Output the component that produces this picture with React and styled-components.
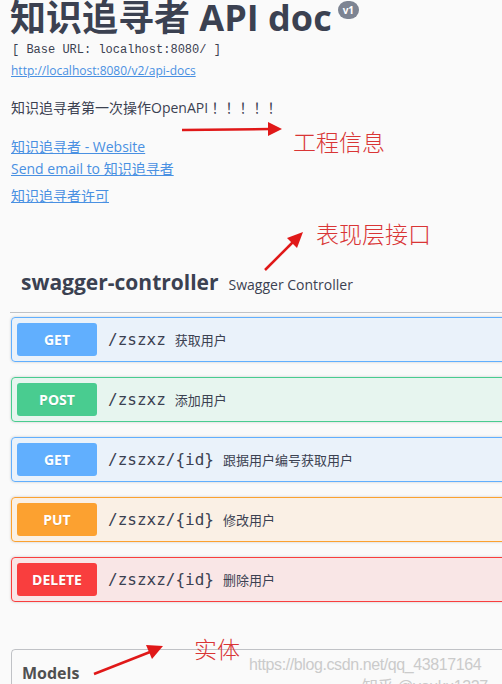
import React from "react";
import styled, { createGlobalStyle } from "styled-components";

const Global = createGlobalStyle`
  html, body { margin: 0; padding: 0; overflow: hidden; background: #fafafa; }
  body { font-family: "Open Sans", "Noto Sans CJK SC", sans-serif; color: #3b4151; }
`;

const Page = styled.div`
  position: relative;
  width: 540px;
  padding-left: 10px;
  height: 684px;
`;

const Info = styled.div`
  display: flex;
  flex-direction: column;
  align-items: flex-start;
`;

const Title = styled.h2`
  margin: 0;
  font-size: 36px;
  line-height: 36px;
  font-weight: 700;
  color: #3b4151;
  display: flex;
  align-items: flex-start;
`;

const Version = styled.span`
  margin-left: 6px;
  margin-top: 1px;
  background: #7d8492;
  color: #fff;
  font-size: 10px;
  font-weight: 700;
  line-height: 18px;
  height: 18px;
  padding: 0 5px;
  border-radius: 9px;
`;

const BaseUrl = styled.pre`
  margin: 6px 0 0 2px;
  font-family: "Liberation Mono", monospace;
  font-size: 12px;
  line-height: 16px;
  color: #3b4151;
`;

const Link = styled.a`
  color: #4990e2;
  text-decoration: underline;
  font-size: ${(p) => (p.$small ? "12px" : "14px")};
  line-height: ${(p) => (p.$small ? "16px" : "20px")};
  margin-top: ${(p) => p.$mt || 0}px;
  margin-left: 1px;
`;

const Description = styled.div`
  margin-top: 18px;
  margin-left: 1px;
  font-size: 14px;
  line-height: 20px;
  color: #3b4151;
`;

const Wide = styled.span`
  font-family: "Noto Sans CJK TC", "Noto Sans CJK SC", sans-serif;
`;

const TagHeader = styled.div`
  margin-top: 61px;
  display: flex;
  align-items: baseline;
  padding: 0 0 15px 11px;
  border-bottom: 1px solid rgba(59, 65, 81, 0.3);
`;

const TagName = styled.span`
  font-size: 21px;
  line-height: 30px;
  font-weight: 700;
  color: #3b4151;
`;

const TagDesc = styled.span`
  margin-left: 10px;
  font-size: 14px;
  color: #3b4151;
`;

const methods = {
  GET: "97, 175, 254",
  POST: "73, 204, 144",
  PUT: "252, 161, 48",
  DELETE: "249, 62, 62",
};

const OpList = styled.div`
  margin-top: 4px;
  display: flex;
  flex-direction: column;
  gap: 15px;
  padding-left: 1px;
`;

const OpBlock = styled.div`
  display: flex;
  align-items: center;
  padding: 5px;
  border: 1px solid rgb(${(p) => p.$rgb});
  background: rgba(${(p) => p.$rgb}, 0.1);
  border-radius: 4px;
  box-shadow: 0 0 3px rgba(0, 0, 0, 0.19);
`;

const Method = styled.span`
  width: 80px;
  height: 33px;
  border-radius: 3px;
  background: rgb(${(p) => p.$rgb});
  color: #fff;
  font-size: 14px;
  font-weight: 700;
  display: flex;
  align-items: center;
  justify-content: center;
  text-shadow: 0 1px 0 rgba(0, 0, 0, 0.1);
`;

const Path = styled.span`
  margin-left: 11px;
  font-family: "DejaVu Sans Mono", monospace;
  font-size: 16px;
  font-weight: 400;
  color: #3b4151;
`;

const OpDesc = styled.span`
  margin-left: 9px;
  font-size: 13px;
  color: #3b4151;
`;

const Models = styled.section`
  margin-top: 47px;
  margin-left: 1px;
  border: 1px solid rgba(59, 65, 81, 0.3);
  border-radius: 4px;
  padding: 12px 10px 40px;
`;

const ModelsTitle = styled.h4`
  margin: 0;
  font-size: 16px;
  line-height: 22px;
  font-weight: 700;
  color: #505050;
`;

const Overlay = styled.svg`
  position: absolute;
  left: 0;
  top: 0;
  pointer-events: none;
`;

const Note = styled.div`
  position: absolute;
  left: ${(p) => p.$x}px;
  top: ${(p) => p.$y}px;
  font-family: "Noto Sans CJK SC", sans-serif;
  font-weight: 300;
  font-size: 23px;
  line-height: 28px;
  color: #d93535;
  white-space: nowrap;
`;

const Watermark = styled.div`
  position: absolute;
  left: ${(p) => p.$x}px;
  top: ${(p) => p.$y}px;
  font-family: "Liberation Sans", "Noto Sans CJK SC", sans-serif;
  font-size: 16px;
  letter-spacing: -0.4px;
  line-height: 22px;
  color: #cbcbcb;
  white-space: nowrap;
`;

const ops = [
  ["GET", "/zszxz", "获取用户"],
  ["POST", "/zszxz", "添加用户"],
  ["GET", "/zszxz/{id}", "跟据用户编号获取用户"],
  ["PUT", "/zszxz/{id}", "修改用户"],
  ["DELETE", "/zszxz/{id}", "删除用户"],
];

export default function App() {
  return (
    <>
      <Global />
      <Page>
        <Info>
          <Title>
            知识追寻者 API doc<Version>v1</Version>
          </Title>
          <BaseUrl>[ Base URL: localhost:8080/ ]</BaseUrl>
          <Link $small $mt={5} href="#">http://localhost:8080/v2/api-docs</Link>
          <Description>
            知识追寻者第一次操作OpenAPI<Wide>！！！！！</Wide>
          </Description>
          <Link $mt={19} href="#">知识追寻者 - Website</Link>
          <Link $mt={2} href="#">Send email to 知识追寻者</Link>
          <Link $mt={7} href="#">知识追寻者许可</Link>
        </Info>
        <TagHeader>
          <TagName>swagger-controller</TagName>
          <TagDesc>Swagger Controller</TagDesc>
        </TagHeader>
        <OpList>
          {ops.map(([m, p, d], i) => (
            <OpBlock key={i} $rgb={methods[m]}>
              <Method $rgb={methods[m]}>{m}</Method>
              <Path>{p}</Path>
              <OpDesc>{d}</OpDesc>
            </OpBlock>
          ))}
        </OpList>
        <Models>
          <ModelsTitle>Models</ModelsTitle>
        </Models>

        <Overlay width="502" height="684" viewBox="0 0 502 684">
          <g fill="#e01818" stroke="#e01818">
            <line x1="182" y1="130" x2="270" y2="129" strokeWidth="2.5" />
            <polygon points="268,122 282,129 268,136" stroke="none" />
            <line x1="265" y1="270" x2="293" y2="242" strokeWidth="2.5" />
            <polygon points="303,232 297,248 287,238" stroke="none" />
            <line x1="94" y1="674" x2="150" y2="652" strokeWidth="2.5" />
            <polygon points="163,646 152,659 146,645" stroke="none" />
          </g>
        </Overlay>
        <Note $x={293} $y={127}>工程信息</Note>
        <Note $x={316} $y={219}>表现层接口</Note>
        <Note $x={194} $y={634}>实体</Note>
        <Watermark $x={249} $y={654}>https://blog.csdn.net/qq_43817164</Watermark>
        <Watermark $x={362} $y={676}>知乎 @youku1327</Watermark>
      </Page>
    </>
  );
}
